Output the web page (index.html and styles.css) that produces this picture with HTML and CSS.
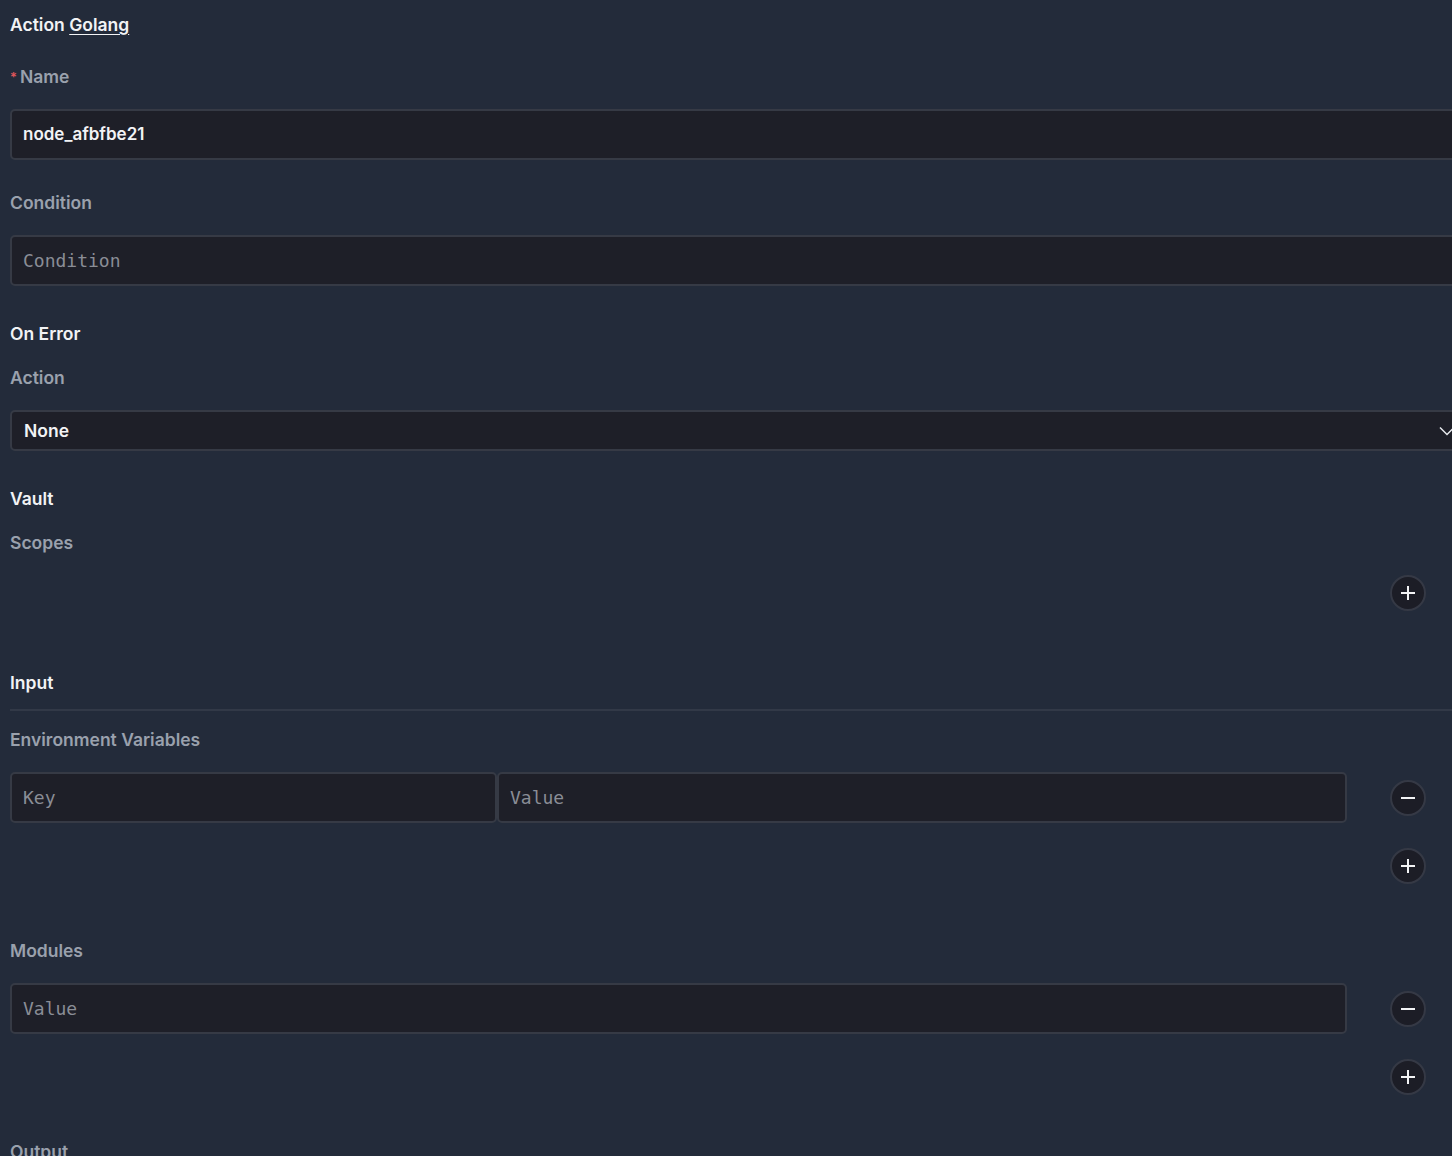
FILE: index.html
```html
<!DOCTYPE html>
<html lang="en">
<head>
    <meta charset="UTF-8">
    <meta name="viewport" content="width=device-width, initial-scale=1.0">
    <title>Action Golang</title>
    <link rel="stylesheet" href="styles.css">
</head>
<body>

<div class="node-form">

    <!-- Header -->
    <h1 class="form-title">Action <a href="#" class="title-link">Golang</a></h1>

    <!-- Name -->
    <div class="form-item first-item">
        <label class="field-label"><span class="required">*</span>Name</label>
        <input type="text" class="text-input" value="node_afbfbe21">
    </div>

    <!-- Condition -->
    <div class="form-item">
        <label class="field-label">Condition</label>
        <input type="text" class="text-input mono" placeholder="Condition">
    </div>

    <!-- On Error -->
    <h2 class="section-title">On Error</h2>
    <div class="form-item tight">
        <label class="field-label">Action</label>
        <div class="select-box">
            <span>None</span>
            <svg class="chevron" width="18" height="18" viewBox="0 0 18 18" fill="none" stroke="currentColor" stroke-width="1.5">
                <path d="M2 5.5l7 7 7-7"/>
            </svg>
        </div>
    </div>

    <!-- Vault -->
    <h2 class="section-title">Vault</h2>
    <div class="form-item tight">
        <label class="field-label">Scopes</label>
        <div class="array-row">
            <div class="array-fields"></div>
            <div class="array-actions">
                <button class="round-btn" type="button">
                    <svg width="16" height="16" viewBox="0 0 16 16" stroke="currentColor" stroke-width="2"><path d="M8 1v14M1 8h14"/></svg>
                </button>
            </div>
        </div>
    </div>

    <!-- Input -->
    <h2 class="section-title input-title">Input</h2>
    <hr class="divider">

    <div class="form-item env-item">
        <label class="field-label">Environment Variables</label>
        <div class="array-row">
            <div class="array-fields">
                <input type="text" class="text-input mono key-input" placeholder="Key">
                <input type="text" class="text-input mono" placeholder="Value">
            </div>
            <div class="array-actions">
                <button class="round-btn" type="button">
                    <svg width="16" height="16" viewBox="0 0 16 16" stroke="currentColor" stroke-width="2"><path d="M1 8h14"/></svg>
                </button>
            </div>
        </div>
        <div class="array-row add-row">
            <div class="array-fields"></div>
            <div class="array-actions">
                <button class="round-btn" type="button">
                    <svg width="16" height="16" viewBox="0 0 16 16" stroke="currentColor" stroke-width="2"><path d="M8 1v14M1 8h14"/></svg>
                </button>
            </div>
        </div>
    </div>

    <div class="form-item modules-item">
        <label class="field-label">Modules</label>
        <div class="array-row">
            <div class="array-fields">
                <input type="text" class="text-input mono" placeholder="Value">
            </div>
            <div class="array-actions">
                <button class="round-btn" type="button">
                    <svg width="16" height="16" viewBox="0 0 16 16" stroke="currentColor" stroke-width="2"><path d="M1 8h14"/></svg>
                </button>
            </div>
        </div>
        <div class="array-row add-row">
            <div class="array-fields"></div>
            <div class="array-actions">
                <button class="round-btn" type="button">
                    <svg width="16" height="16" viewBox="0 0 16 16" stroke="currentColor" stroke-width="2"><path d="M8 1v14M1 8h14"/></svg>
                </button>
            </div>
        </div>
    </div>

    <div class="form-item output-item">
        <label class="field-label">Output</label>
    </div>

</div>

</body>
</html>
```

FILE: styles.css
```css
/* Basic Reset */
* {
    margin: 0;
    padding: 0;
    box-sizing: border-box;
}

body {
    font-family: 'Inter', 'Lato', sans-serif;
    background-color: #232b3a;
    color: #eceef2;
    overflow: hidden;
    height: 1156px;
}

/* Form column, wider than the panel so fields run off the edge */
.node-form {
    width: 1462px;
    margin-left: 10px;
    padding-top: 13px;
}

.form-title {
    font-size: 17.5px;
    font-weight: 600;
    line-height: 24px;
    color: #f2f3f5;
}

.title-link {
    color: inherit;
    text-decoration: underline;
    text-underline-offset: 3px;
}

.section-title {
    font-size: 17.5px;
    font-weight: 600;
    line-height: 24px;
    color: #f2f3f5;
    margin-top: 36px;
}

.input-title {
    margin-top: 60px;
}

.divider {
    border: none;
    height: 2px;
    background-color: #323947;
    margin-top: 14px;
}

/* Form items */
.form-item {
    margin-top: 31px;
}

.form-item.first-item {
    margin-top: 28px;
}

.form-item.tight {
    margin-top: 20px;
}

.form-item.env-item {
    margin-top: 17px;
}

.form-item.modules-item {
    margin-top: 55px;
}

.form-item.output-item {
    margin-top: 45px;
}

.field-label {
    display: block;
    font-size: 17.5px;
    font-weight: 600;
    line-height: 24px;
    color: #9aa1ad;
    margin-bottom: 20px;
}

.required {
    color: #e0565b;
    font-size: 13px;
    margin-right: 3px;
    vertical-align: 1px;
}

.text-input {
    display: block;
    width: 100%;
    height: 51px;
    padding: 0 11px 2px;
    background-color: #1e1f28;
    border: 2px solid #363a45;
    border-radius: 5px;
    color: #f2f3f5;
    font-family: 'Inter', 'Lato', sans-serif;
    font-size: 17px;
    font-weight: 600;
    outline: none;
}

.text-input.mono {
    font-family: 'DejaVu Sans Mono', monospace;
    font-size: 18px;
    font-weight: 400;
    padding-bottom: 0;
}

.text-input::placeholder {
    color: #8a8d96;
}

/* Select */
.select-box {
    display: flex;
    align-items: center;
    justify-content: space-between;
    height: 41px;
    padding: 0 14px 0 12px;
    background-color: #1e1f28;
    border: 2px solid #363a45;
    border-radius: 5px;
    font-size: 17.5px;
    font-weight: 600;
    color: #f2f3f5;
}

.chevron {
    color: #e6e8ec;
}

/* Array rows with round action buttons */
.array-row {
    display: flex;
    align-items: center;
}

.array-row.add-row {
    margin-top: 25px;
}

.array-fields {
    width: 1337px;
    display: flex;
}

.array-fields .text-input {
    flex: 1;
}

.array-fields .key-input {
    flex: 0 0 487px;
}

.array-actions {
    flex: 1;
    padding-left: 43px;
}

.round-btn {
    width: 36px;
    height: 36px;
    border-radius: 50%;
    border: 2px solid #353945;
    background-color: #1c1d26;
    color: #f2f3f5;
    display: flex;
    align-items: center;
    justify-content: center;
    cursor: pointer;
}
```
